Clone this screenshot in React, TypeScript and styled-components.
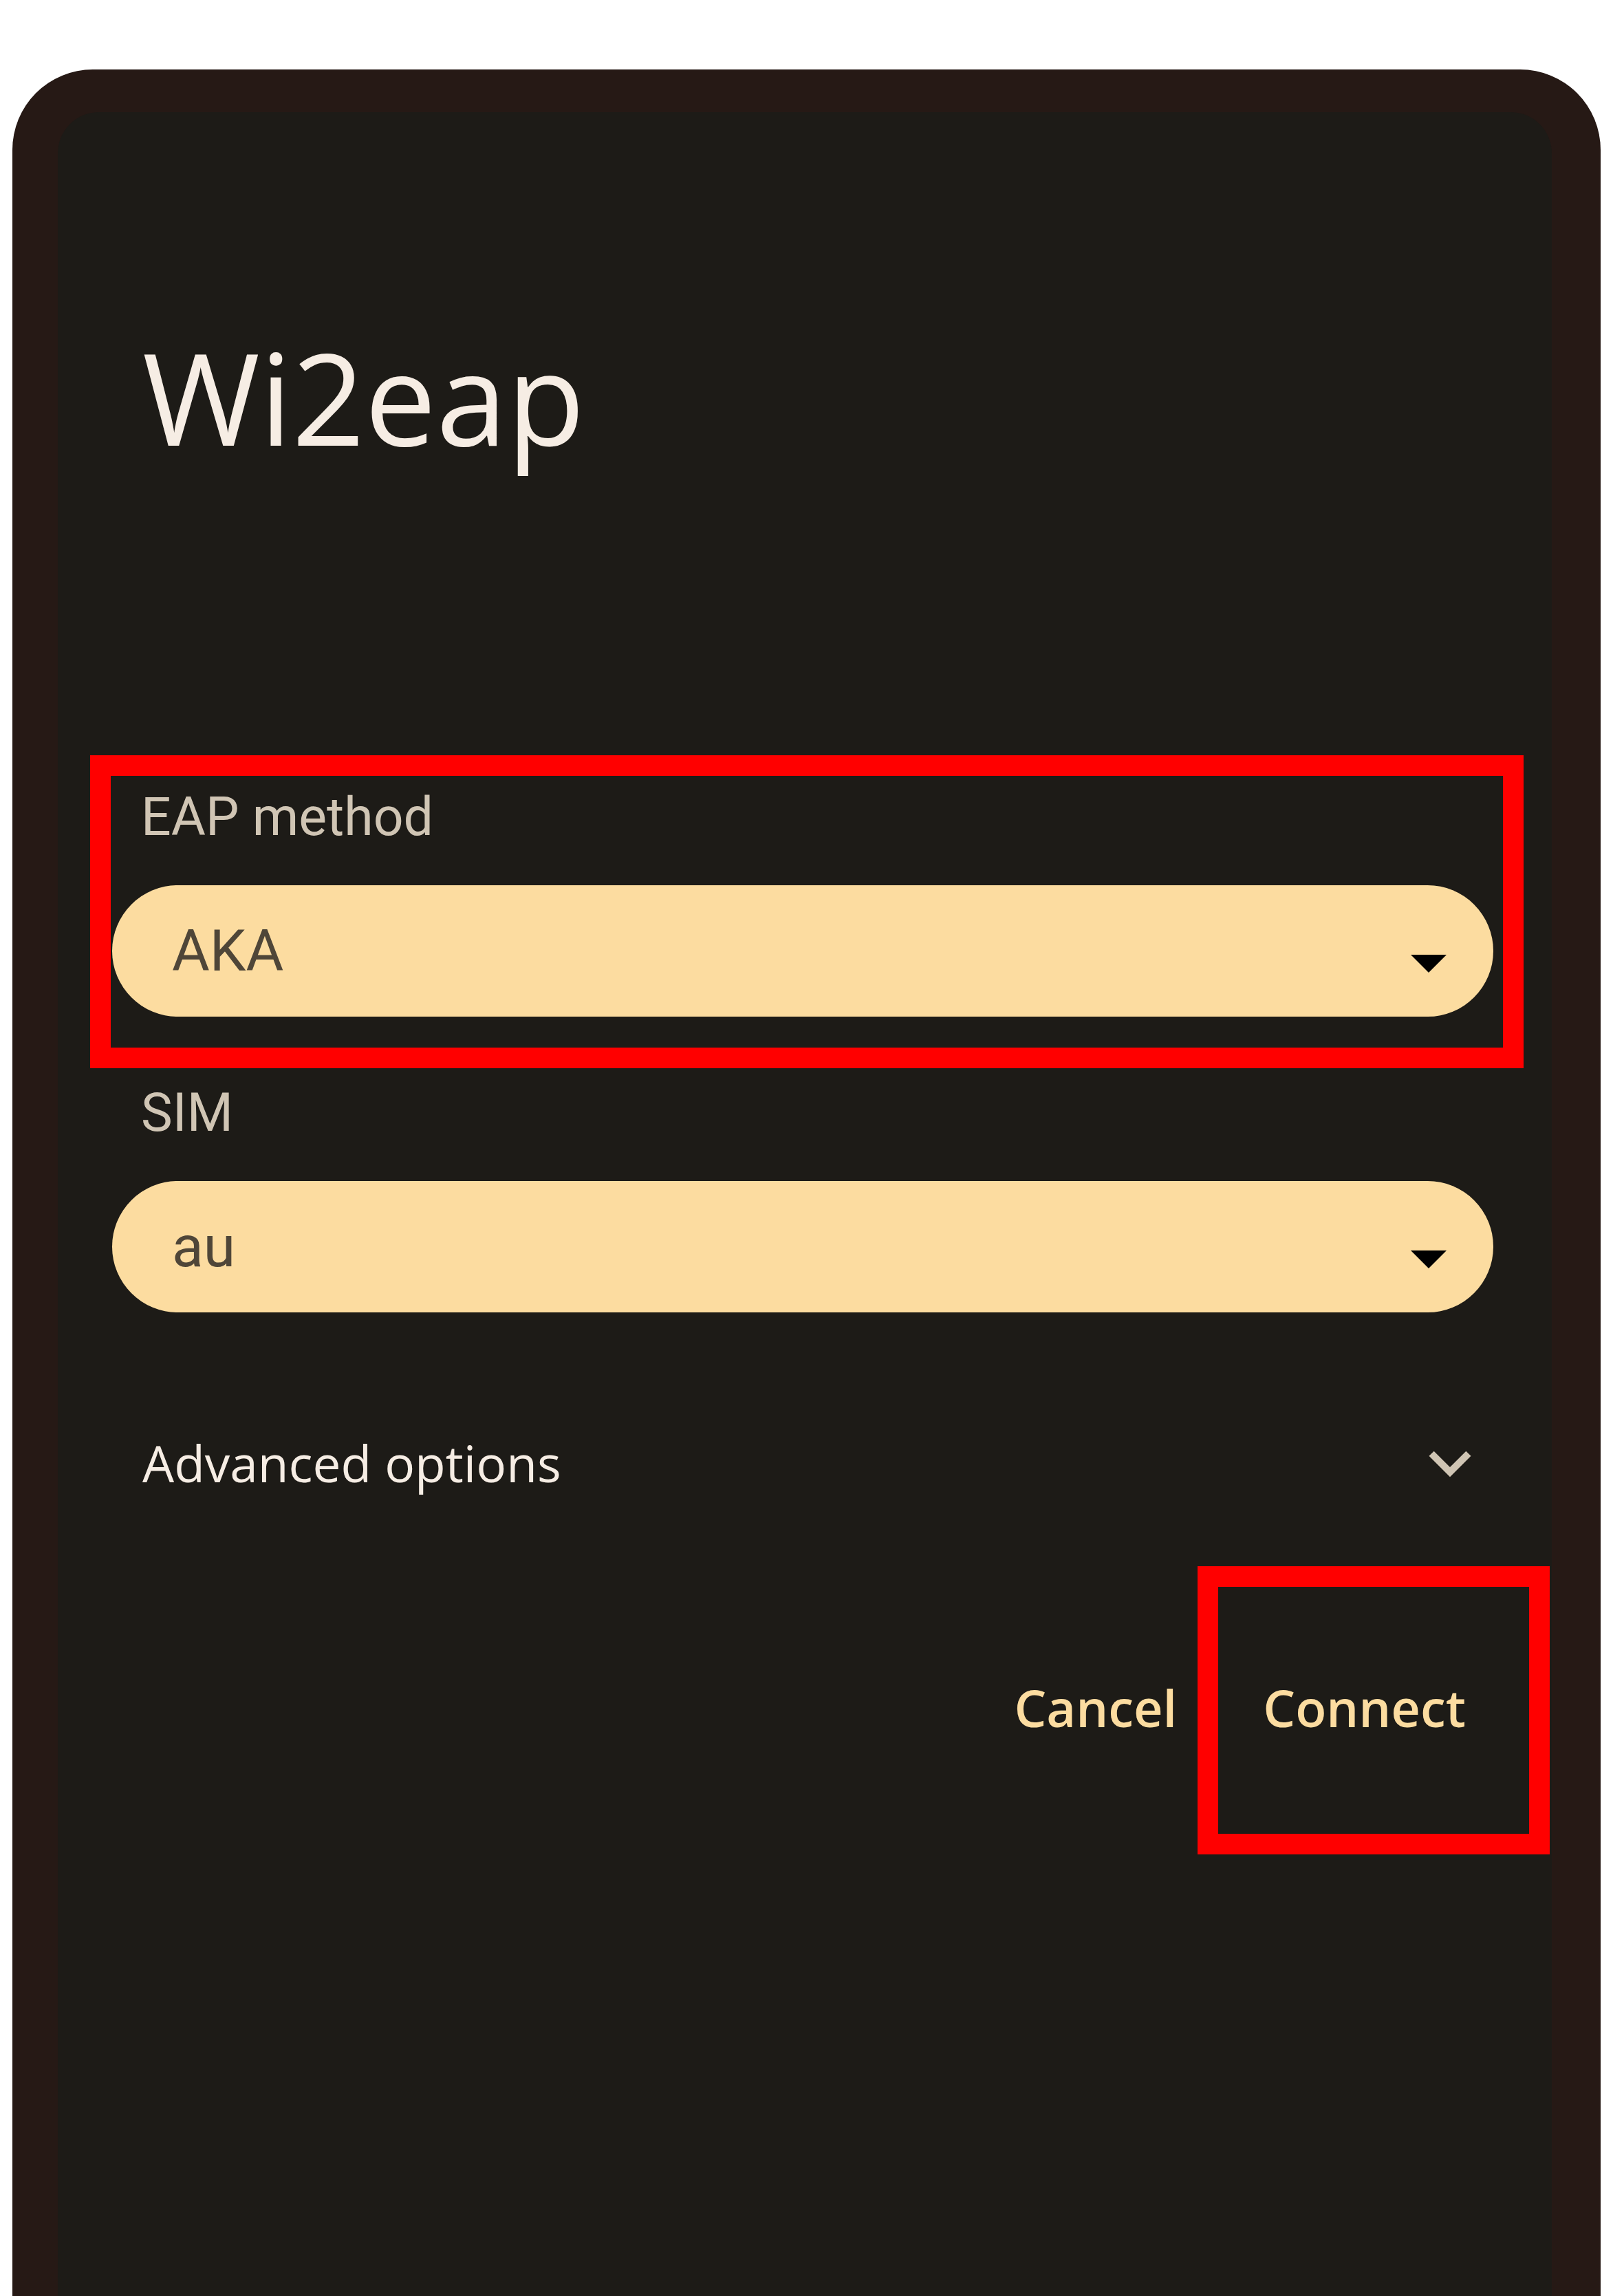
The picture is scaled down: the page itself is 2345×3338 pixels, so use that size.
import React, {FC} from "react";
import styled, {createGlobalStyle} from "styled-components";

const GlobalStyle = createGlobalStyle`
  html, body {
    margin: 0;
    padding: 0;
    background: #fff;
  }
  body {
    font-family: Roboto, "Noto Sans", sans-serif;
  }
`

const Page = styled.div`
  width: 2345px;
  height: 3338px;
  box-sizing: border-box;
  padding: 101px 18px 0 18px;
  overflow: hidden;
  background: #fff;
`
const Device = styled.div`
  height: 100%;
  box-sizing: border-box;
  padding: 62px 71px 0 66px;
  background: #261915;
  border-radius: 117px 117px 0 0;
`
const Dialog = styled.div`
  height: 100%;
  box-sizing: border-box;
  padding: 320px 85px 0 79px;
  display: flex;
  flex-direction: column;
  background: #1d1b17;
  border-radius: 60px 60px 0 0;
`
const Title = styled.h1`
  margin: 0 0 0 44px;
  font-family: "Open Sans", sans-serif;
  font-weight: 400;
  font-size: 185px;
  line-height: 186px;
  color: #f6ede4;
`
const Field = styled.div<{ $top: number }>`
  position: relative;
  display: flex;
  flex-direction: column;
  margin-top: ${p => p.$top}px;
`
const Label = styled.div`
  margin: 0 0 60px 42px;
  font-family: Roboto, sans-serif;
  font-size: 77px;
  line-height: 77px;
  color: #d0c5b4;
`
const Select = styled.div`
  height: 191px;
  box-sizing: border-box;
  padding: 0 68px 0 87px;
  display: flex;
  align-items: center;
  justify-content: space-between;
  background: #fcdca0;
  border-radius: 96px;
`
const Value = styled.span`
  font-family: Roboto, sans-serif;
  font-size: 84px;
  line-height: 84px;
  color: #4f4638;
`
const Caret = styled.svg`
  width: 52px;
  height: 26px;
  margin-top: 37px;
`
const AdvancedRow = styled.div`
  margin-top: 158px;
  height: 122px;
  padding: 0 2px 0 44px;
  display: flex;
  align-items: center;
  justify-content: space-between;
`
const AdvancedText = styled.span`
  font-family: "Open Sans", sans-serif;
  font-size: 73px;
  line-height: 74px;
  color: #f6ede4;
`
const Chevron = styled.svg`
  width: 122px;
  height: 122px;
`
const Actions = styled.div`
  margin-top: 198px;
  display: flex;
  justify-content: flex-end;
  gap: 45px;
`
const TextButton = styled.button`
  position: relative;
  height: 192px;
  padding: 0 40px;
  border: none;
  outline: none;
  background: transparent;
  font-family: "Open Sans", sans-serif;
  font-weight: 600;
  font-size: 74px;
  line-height: 77px;
  color: #fcdca0;
`

interface Inset {
  top: number
  right: number
  bottom: number
  left: number
}

// red annotation frame drawn over a part of the dialog
const Highlight = styled.div<{ $inset: Inset }>`
  position: absolute;
  top: ${p => p.$inset.top}px;
  right: ${p => p.$inset.right}px;
  bottom: ${p => p.$inset.bottom}px;
  left: ${p => p.$inset.left}px;
  border: 30px solid #ff0000;
  pointer-events: none;
`

const DropDown: FC<{ value: string }> = ({value}) => (
  <Select>
    <Value>{value}</Value>
    <Caret viewBox="0 0 10 5">
      <path d="M0 0l5 5 5-5z" fill="#000"/>
    </Caret>
  </Select>
)

const App: FC = () => {
  return (
    <Page>
      <GlobalStyle/>
      <Device>
        <Dialog>
          <Title>Wi2eap</Title>
          <Field $top={481}>
            <Label>EAP method</Label>
            <DropDown value="AKA"/>
            <Highlight $inset={{top: -52, right: -44, bottom: -75, left: -32}}/>
          </Field>
          <Field $top={102}>
            <Label>SIM</Label>
            <DropDown value="au"/>
          </Field>
          <AdvancedRow>
            <AdvancedText>Advanced options</AdvancedText>
            <Chevron viewBox="0 0 24 24">
              <path d="M16.59 8.59L12 13.17 7.41 8.59 6 10l6 6 6-6z" fill="#d0c5b4"/>
            </Chevron>
          </AdvancedRow>
          <Actions>
            <TextButton>Cancel</TextButton>
            <TextButton>
              Connect
              <Highlight $inset={{top: -109, right: -82, bottom: -118, left: -55}}/>
            </TextButton>
          </Actions>
        </Dialog>
      </Device>
    </Page>
  )
}

export default App
